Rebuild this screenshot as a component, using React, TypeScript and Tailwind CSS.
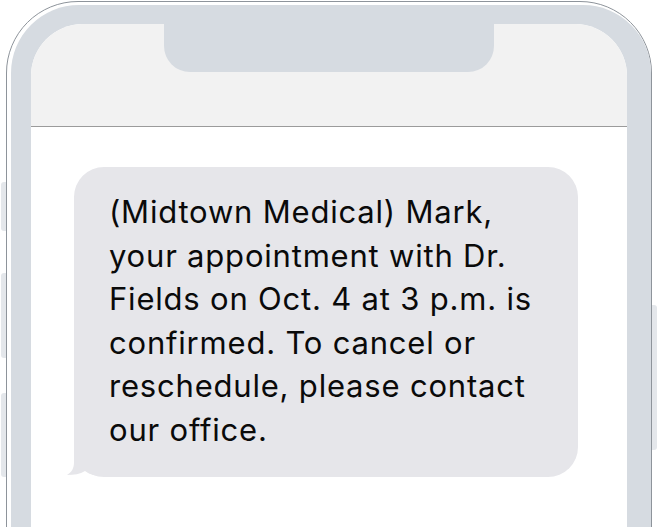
import React from "react";

const lines = [
  "(Midtown Medical) Mark,",
  "your appointment with Dr.",
  "Fields on Oct. 4 at 3 p.m. is",
  "confirmed. To cancel or",
  "reschedule, please contact",
  "our office.",
];

export default function App() {
  return (
    <div className="relative w-[658px] h-[527px] overflow-hidden bg-white">
      {/* side buttons */}
      <div className="absolute left-[1px] top-[182px] w-[6px] h-[49px] rounded-l-[3px] bg-[#e4e7eb]" />
      <div className="absolute left-[1px] top-[273px] w-[6px] h-[85px] rounded-l-[3px] bg-[#e4e7eb]" />
      <div className="absolute left-[1px] top-[393px] w-[6px] h-[84px] rounded-l-[3px] bg-[#e4e7eb]" />
      <div className="absolute left-[651px] top-[305px] w-[6px] h-[145px] rounded-r-[3px] bg-[#e4e7eb]" />

      <div className="relative ml-[6px] mt-[1px] w-[646px] h-[600px] rounded-t-[72px] border border-[#8e949b] bg-white pl-[4px] pt-[3px]">
        <div className="h-full rounded-t-[68px] bg-[#d6dbe1] pl-[20px] pt-[19px] pr-[24px]">
          <div className="h-full rounded-t-[52px] overflow-hidden bg-white flex flex-col">
            <div className="h-[103px] shrink-0 bg-[#f2f2f2] border-b border-[#9b9b9b] flex justify-center">
              <div className="w-[330px] h-[48px] rounded-b-[26px] bg-[#d6dbe1]" />
            </div>
            <div className="pl-[43px] pt-[40px]">
              <div className="relative w-[504px] rounded-[30px] bg-[#e6e6ea] pl-[35px] pt-[23px] pb-[25px]">
                <svg
                  className="absolute left-[-8px] bottom-[-1px]"
                  width="50"
                  height="40"
                  viewBox="0 0 50 40"
                >
                  <path
                    d="M8 0 L8 24 C8 30 6 34 1 37 C8 37 14 36 19 33 C24 37 30 38 40 38 L40 0 Z"
                    fill="#e6e6ea"
                  />
                </svg>
                <div
                  className="relative text-[31px] leading-[43.6px] tracking-[0.8px] text-[#0a0a0a] whitespace-nowrap"
                  style={{ fontFamily: "Inter, Roboto, sans-serif" }}
                >
                  {lines.map((l) => (
                    <div key={l}>{l}</div>
                  ))}
                </div>
              </div>
            </div>
          </div>
        </div>
      </div>
    </div>
  );
}
